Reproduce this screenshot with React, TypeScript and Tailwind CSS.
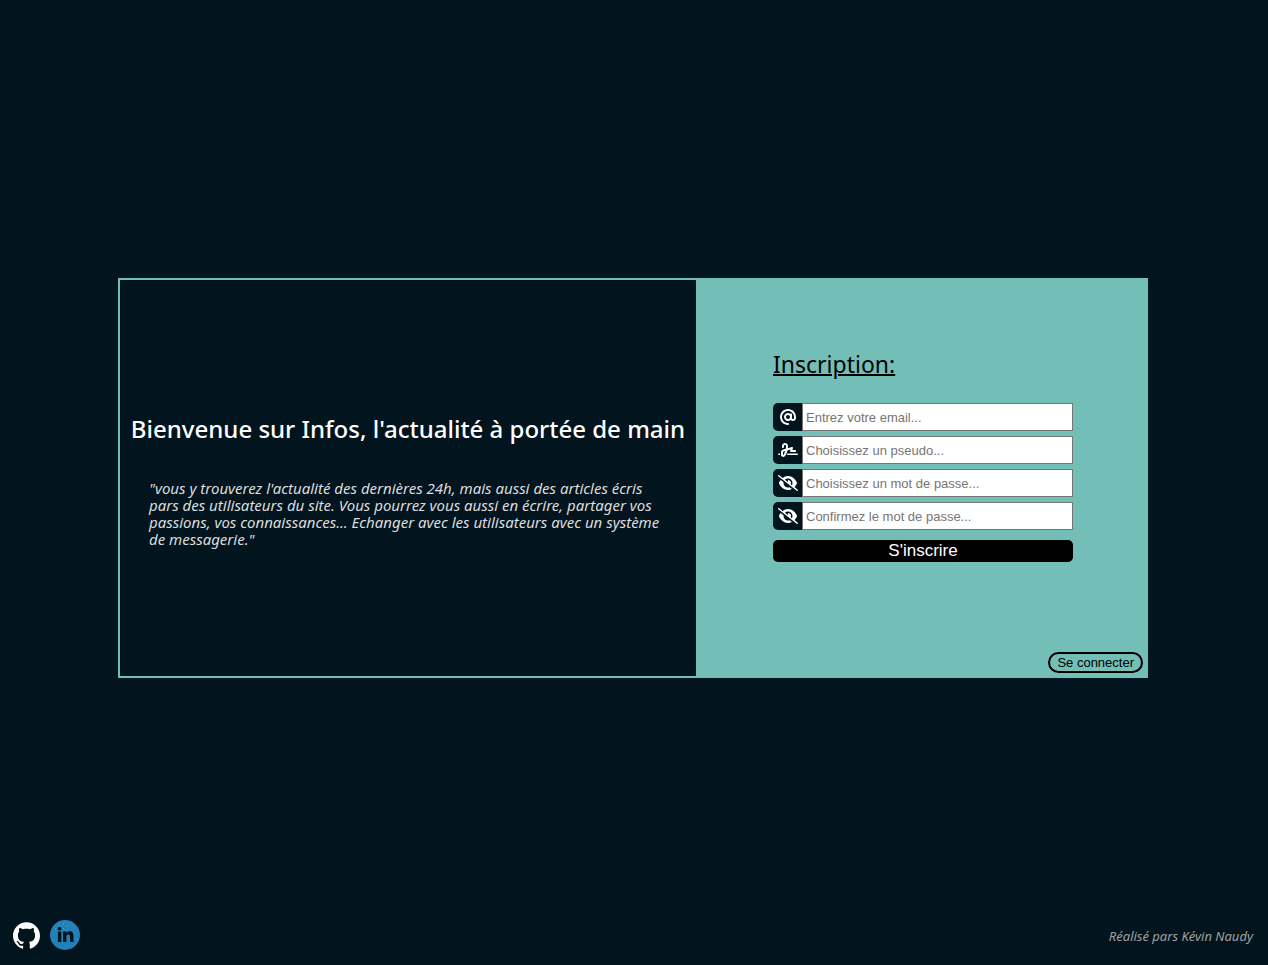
import type { InputHTMLAttributes, ReactNode } from "react";
import { FaAt, FaEyeSlash, FaSignature } from "react-icons/fa6";
import { SiGithub } from "react-icons/si";

type FieldProps = InputHTMLAttributes<HTMLInputElement> & {
  id: string;
  label: string;
  icon: ReactNode;
};

function Field({ id, label, icon, ...input }: FieldProps) {
  return (
    <div className="flex h-7">
      <label
        htmlFor={id}
        aria-label={label}
        className="flex w-[30px] shrink-0 items-center justify-center rounded-l-[5px] bg-[#02141d] text-base text-white"
      >
        {icon}
      </label>
      <input
        id={id}
        {...input}
        className="-ml-px min-w-0 flex-1 border border-[#767676] bg-white px-[3px] pt-[2px] text-[13px] text-black placeholder:text-[#757575]"
      />
    </div>
  );
}

function LinkedInLogo() {
  return (
    <svg viewBox="0 0 30 30" className="size-[30px]" aria-hidden="true">
      <circle cx="15" cy="15" r="15" fill="#2380b8" />
      <g fill="#02141d">
        <circle cx="9.6" cy="8.6" r="1.9" />
        <path d="M7.900 11.500h3.400v10.500h-3.400zM13 11.500h3.200v1.500c.6-1 1.700-1.800 3.200-1.800 3.300 0 4.100 2.100 4.100 4.900V22h-3.400v-5c0-1.300-.1-2.500-1.700-2.500-1.600 0-2 1.200-2 2.400V22H13z" />
      </g>
      <g fill="#7fae5c">
        <circle cx="13.500" cy="3.600" r=".6" />
        <circle cx="9" cy="5" r=".6" />
        <circle cx="16.500" cy="6" r=".6" />
        <circle cx="5.500" cy="9" r=".6" />
        <circle cx="13.500" cy="8.500" r=".6" />
      </g>
    </svg>
  );
}

export default function App() {
  return (
    <div className="flex min-h-screen flex-col bg-[#02141d] font-['Noto_Sans',sans-serif]">
      <main className="flex flex-1 items-center justify-center pt-[278px] pr-[18px] pl-4">
        <div className="grid min-h-[400px] w-full max-w-[1030px] grid-cols-[576fr_452fr] border-2 border-r-0 border-[#74beb8]">
          <section className="flex flex-col justify-center gap-[35px] pt-1">
            <h1 className="text-center text-2xl font-medium text-white">
              Bienvenue sur Infos, l'actualité à portée de main
            </h1>
            <p className="px-[29px] text-[15px] leading-[17px] text-[#dddddd] italic">
              "vous y trouverez l'actualité des dernières 24h, mais aussi des articles écris pars des
              utilisateurs du site. Vous pourrez vous aussi en écrire, partager vos passions, vos
              connaissances... Echanger avec les utilisateurs avec un système de messagerie."
            </p>
          </section>
          <section className="flex flex-col bg-[#74beb8] pl-[2px]">
            <form className="mx-auto mt-[68px] flex w-[300px] flex-col gap-[5px] font-['Liberation_Sans',sans-serif]">
              <h2 className="mb-[18px] font-['Noto_Sans',sans-serif] text-[23px] leading-8 text-black underline decoration-2">
                Inscription:
              </h2>
              <Field id="email" label="Email" type="email" placeholder="Entrez votre email..." icon={<FaAt />} />
              <Field id="pseudo" label="Pseudo" type="text" placeholder="Choisissez un pseudo..." icon={<FaSignature className="h-4 w-5" />} />
              <Field id="password" label="Mot de passe" type="password" placeholder="Choisissez un mot de passe..." icon={<FaEyeSlash className="h-4 w-5" />} />
              <Field id="confirm" label="Confirmation du mot de passe" type="password" placeholder="Confirmez le mot de passe..." icon={<FaEyeSlash className="h-4 w-5" />} />
              <button type="submit" className="mt-[5px] h-[22px] rounded-[5px] bg-black text-[17px] leading-[22px] text-white">
                S'inscrire
              </button>
            </form>
            <button type="button" className="mt-auto mr-[5px] mb-[3px] h-[21px] self-end rounded-full border-2 border-black px-[7px] font-['Liberation_Sans',sans-serif] text-[13px] leading-[17px] text-black">
              Se connecter
            </button>
          </section>
        </div>
      </main>
      <footer className="flex h-[287px] items-end justify-between pr-[15px] pb-[15px] pl-[13px]">
        <div className="flex items-center gap-[10px]">
          <a href="#github" aria-label="GitHub" className="text-white">
            <SiGithub className="size-[27px]" />
          </a>
          <a href="#linkedin" aria-label="LinkedIn">
            <LinkedInLogo />
          </a>
        </div>
        <p className="mb-1 text-[13px] leading-5 text-[#a0a0a0] italic">Réalisé pars Kévin Naudy</p>
      </footer>
    </div>
  );
}
